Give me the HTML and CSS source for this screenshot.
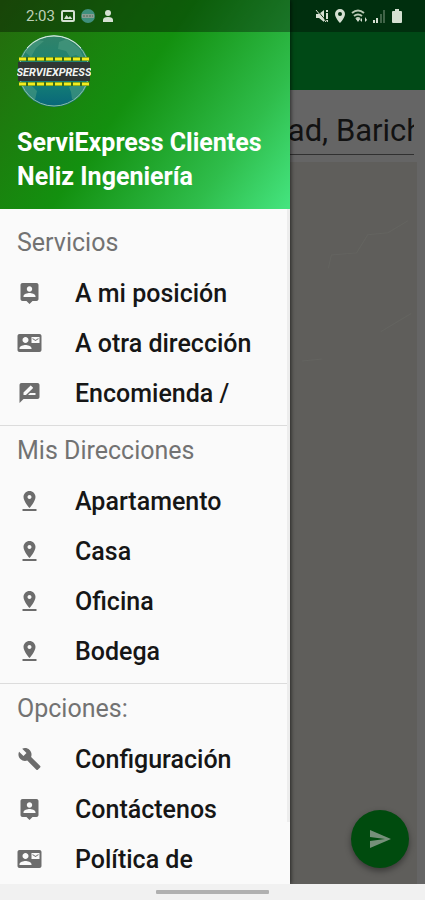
FILE: index.html
```html
<!DOCTYPE html>
<html lang="es">
<head>
<meta charset="UTF-8">
<meta name="viewport" content="width=device-width, initial-scale=1.0">
<title>ServiExpress Clientes</title>
<link rel="stylesheet" href="styles.css">
</head>
<body>
<svg class="sprite" aria-hidden="true">
    <symbol id="pin-person" viewBox="0 0 24 24"><path d="M19 2H5c-1.1 0-2 .9-2 2v14c0 1.1.9 2 2 2h4l3 3 3-3h4c1.1 0 2-.9 2-2V4c0-1.100-.9-2-2-2zm-7 3.300c1.490 0 2.700 1.210 2.700 2.700s-1.210 2.700-2.700 2.700S9.300 9.490 9.300 8s1.210-2.700 2.700-2.700zM18 16H6v-.9c0-2 4-3.100 6-3.100s6 1.100 6 3.100v.9z"/></symbol>
    <symbol id="contact-mail" viewBox="0 0 24 24"><path d="M21 8V7l-3 2-3-2v1l3 2 3-2zm1-5H2C.9 3 0 3.900 0 5v14c0 1.100.9 2 2 2h20c1.100 0 1.990-.9 1.990-2L24 5c0-1.100-.9-2-2-2zM8 6c1.660 0 3 1.340 3 3s-1.340 3-3 3-3-1.340-3-3 1.340-3 3-3zm6 12H2v-1c0-2 4-3.100 6-3.100s6 1.100 6 3.100v1zm8-6h-8V6h8v6z"/></symbol>
    <symbol id="rate" viewBox="0 0 24 24"><path d="M20 2H4c-1.100 0-1.990.9-1.990 2L2 22l4-4h14c1.100 0 2-.9 2-2V4c0-1.100-.9-2-2-2zM6 14v-2.470l6.880-6.880c.2-.2.510-.2.710 0l1.770 1.770c.2.2.2.510 0 .710L8.470 14H6zm12 0h-7.500l2-2H18v2z"/></symbol>
    <symbol id="pin-drop" viewBox="0 0 24 24"><path d="M18 8c0-3.310-2.690-6-6-6S6 4.690 6 8c0 4.500 6 11 6 11s6-6.500 6-11zm-8 0c0-1.100.9-2 2-2s2 .9 2 2-.89 2-2 2c-1.100 0-2-.9-2-2zM5 20v2h14v-2H5z"/></symbol>
    <symbol id="wrench" viewBox="0 0 24 24"><path d="M22.700 19l-9.100-9.100c.9-2.300.4-5-1.500-6.900-2-2-5-2.400-7.400-1.300L9 6 6 9 1.600 4.700C.4 7.100.9 10.100 2.900 12.100c1.900 1.900 4.600 2.400 6.900 1.500l9.100 9.100c.4.4 1 .4 1.400 0l2.300-2.300c.5-.4.5-1.100.1-1.400z"/></symbol>
</svg>

<div class="screen">
    <div class="statusbar">
        <div class="status-group">
            <span class="clock">2:03</span>
            <svg class="status-icon" viewBox="0 0 14 14"><path fill-rule="evenodd" d="M2 1h10q2 0 2 2v8q0 2-2 2H2q-2 0-2-2V3q0-2 2-2zM2 3v8h10V3zM3 10l2.500-4 2 2.500L9 7l2.500 3z"/></svg>
            <svg class="status-icon" viewBox="0 0 14 14"><circle cx="7" cy="7" r="7" fill="#3f8f7c"/><path d="M1 5h12v4H1z" fill="#8a9d92"/><path d="M2 7h10" stroke="#4d6958" stroke-dasharray="2 1"/></svg>
            <svg class="status-icon" viewBox="0 0 14 14"><circle cx="7" cy="4" r="3"/><path d="M2 13v-2q0-3 5-3t5 3v2z"/></svg>
        </div>
        <div class="status-group right">
            <svg class="status-icon" viewBox="0 0 14 14"><path d="M1 5h3L9 1v12L4 9H1zM11 1h2v2h-2zM11 4h2v6h-2zM11 11h2v2h-2z"/><path d="M2 1l10 12" stroke="#0a3008" stroke-width="1"/><path d="M1 1l10 12" stroke="#d5e0d2" stroke-width="1"/></svg>
            <svg class="status-icon" viewBox="0 0 14 14"><path fill-rule="evenodd" d="M7 0a5 5 0 0 1 5 5c0 4-5 9-5 9S2 9 2 5a5 5 0 0 1 5-5zm0 3a2 2 0 1 0 0 4 2 2 0 0 0 0-4z"/></svg>
            <svg class="status-icon wide" viewBox="0 0 17 14"><path d="M1 4q6-5 12 0M3 7q4-3 8 0M5 10q2-2 4 0" fill="none" stroke="#b9cab5" stroke-width="2"/><path d="M7 13L5 10h4zM11 13V9l-2 2zM14 8v5l2-2z"/></svg>
            <svg class="status-icon" viewBox="0 0 14 14"><path d="M1 11h2v3H1zM4 9h2v5H4z"/><path d="M8 5h2v9H8zM11 1h2v13h-2z" opacity=".3"/></svg>
            <svg class="status-icon" viewBox="0 0 14 14"><path d="M5 0h4v2h2q1 0 1 1v10q0 1-1 1H3q-1 0-1-1V3q0-1 1-1h2z"/></svg>
        </div>
    </div>

    <nav class="drawer">
        <header class="drawer-header">
            <svg class="logo" viewBox="0 0 74 74" role="img" aria-label="ServiExpress">
                <defs>
                    <linearGradient id="sea" x1="0" y1="0" x2="0" y2="1">
                        <stop offset="0" stop-color="#318269"/>
                        <stop offset=".6" stop-color="#168374"/>
                        <stop offset="1" stop-color="#08667a"/>
                    </linearGradient>
                    <clipPath id="round"><circle cx="37" cy="37" r="36"/></clipPath>
                </defs>
                <circle cx="37" cy="37" r="36" fill="url(#sea)"/>
                <g clip-path="url(#round)">
                    <path d="M42 8l8-3 12 9 6 12-9-5-6 2-4-6-8-2zM4 49l9 1 7 7-2 9-5 3-9-11zM52 53l8-3h10v9l-9 9-6-3-1-7zM8 18L18 6l9 1-8 7-5 9z" fill="#4b9b80" opacity=".6"/>
                </g>
                <circle cx="37" cy="37" r="35" fill="none" stroke="#8cc0a4" stroke-width="1"/>
                <path d="M10 14A36 36 0 0 1 64 14" fill="none" stroke="#d8eddb" stroke-width="1"/>
                <path d="M2 25h71M2 50h71" stroke="#3b6b17" stroke-width="4"/>
                <path d="M2 25h71M2 50h71" stroke="#f2ed20" stroke-width="3" stroke-dasharray="7 2"/>
                <path d="M1 28h72v19H1z" fill="#303533"/>
                <text class="logo-text" x="37" y="42" text-anchor="middle">SERVIEXPRESS</text>
            </svg>
            <h1>ServiExpress Clientes<br>Neliz Ingeniería</h1>
        </header>

        <section class="menu-section">
            <h2>Servicios</h2>
            <a href="#"><svg><use href="#pin-person"/></svg>A mi posición</a>
            <a href="#"><svg><use href="#contact-mail"/></svg>A otra dirección</a>
            <a href="#"><svg><use href="#rate"/></svg>Encomienda /</a>
        </section>
        <section class="menu-section">
            <h2>Mis Direcciones</h2>
            <a href="#"><svg><use href="#pin-drop"/></svg>Apartamento</a>
            <a href="#"><svg><use href="#pin-drop"/></svg>Casa</a>
            <a href="#"><svg><use href="#pin-drop"/></svg>Oficina</a>
            <a href="#"><svg><use href="#pin-drop"/></svg>Bodega</a>
        </section>
        <section class="menu-section">
            <h2>Opciones:</h2>
            <a href="#"><svg><use href="#wrench"/></svg>Configuración</a>
            <a href="#"><svg><use href="#pin-person"/></svg>Contáctenos</a>
            <a href="#"><svg><use href="#contact-mail"/></svg>Política de</a>
        </section>
    </nav>

    <main class="page">
        <div class="toolbar"></div>
        <input class="address" type="text" aria-label="Dirección" value="ad, Barichara">
        <div class="map">
            <svg class="roads" viewBox="0 0 126 240" aria-hidden="true"><path d="M38 105l3-13 25-2 11-18 20-2 20-12M12 197l20-2M90 168l30-18" fill="none" stroke="#646460" stroke-width="1"/></svg>
            <button class="send" type="button" aria-label="Enviar">
                <svg viewBox="0 0 24 24"><path d="M2 21l21-9L2 3v7l15 2-15 2z"/></svg>
            </button>
        </div>
    </main>

    <footer class="navbar"><span class="handle"></span></footer>
</div>
</body>
</html>
```
FILE: styles.css
```css
* {
    box-sizing: border-box;
}
body {
    margin: 0;
    font-family: Roboto, "Liberation Sans", sans-serif;
    background-color: #f1f1f1;
}
.sprite {
    display: none;
}
.screen {
    position: relative;
    min-height: 100vh;
    display: grid;
    grid-template-columns: minmax(0, 15fr) minmax(0, 7fr);
    grid-template-rows: 1fr 16px;
    overflow: hidden;
}

/* status bar, drawn over the drawer and the page */
.statusbar {
    position: absolute;
    z-index: 3;
    top: 0;
    left: 0;
    right: 0;
    height: 32px;
    padding: 0 21px 0 26px;
    display: flex;
    justify-content: space-between;
    align-items: center;
    background-color: rgba(0, 0, 0, 0.35);
}
.status-group {
    display: flex;
    align-items: center;
    gap: 6px;
}
.status-group.right {
    gap: 4px;
}
.clock {
    font-size: 15px;
    color: #bdd0b7;
}
.status-icon {
    width: 14px;
    height: 14px;
    fill: #d5e0d2;
}
.status-icon.wide {
    width: 17px;
}

/* drawer */
.drawer {
    position: relative;
    z-index: 2;
    background-color: #fafafa;
    box-shadow: 1px 0 4px rgba(0, 0, 0, 0.6);
}
.drawer::after {
    content: "";
    position: absolute;
    top: 209px;
    right: 0;
    bottom: 62px;
    width: 3px;
    background-color: #ededed;
}
.drawer-header {
    height: 209px;
    padding: 34px 17px 0;
    background: linear-gradient(125deg, #266a0d 0%, #13900f 45%, #2fbd4b 78%, #45e580 100%);
}
.logo {
    display: block;
    width: 74px;
    height: 74px;
}
.logo-text {
    font-size: 11px;
    font-weight: bold;
    font-style: italic;
    fill: #f2f4f2;
}
h1 {
    margin: 18px 0 0;
    font-size: 25px;
    line-height: 34px;
    font-weight: bold;
    color: white;
    white-space: nowrap;
}
.menu-section {
    padding-bottom: 7px;
    border-bottom: 1px solid #dcdcdc;
}
.drawer-header + .menu-section {
    padding-top: 9px;
}
.menu-section:last-child {
    padding-bottom: 0;
    border-bottom: none;
}
h2 {
    margin: 0;
    padding-left: 17px;
    font-size: 25px;
    line-height: 50px;
    font-weight: normal;
    color: #727272;
}
.menu-section a {
    display: flex;
    align-items: center;
    height: 50px;
    padding-left: 17px;
    font-size: 25px;
    font-weight: 500;
    color: #161616;
    text-decoration: none;
    white-space: nowrap;
}
.menu-section svg {
    width: 25px;
    height: 24px;
    margin-right: 33px;
    fill: #6c6c6c;
}

/* dimmed page behind the drawer */
.page {
    display: flex;
    flex-direction: column;
    background-color: #656565;
}
.toolbar {
    height: 90px;
    background-color: #004916;
}
.address {
    height: 54px;
    margin: 11px 11px 0 -2px;
    padding: 6px 0 0;
    border: none;
    border-bottom: 1px solid #303030;
    background: none;
    font-family: inherit;
    font-size: 31px;
    color: #121212;
    outline: none;
    min-width: 0;
}
.map {
    flex: 1;
    display: flex;
    flex-direction: column;
    justify-content: space-between;
    margin: 7px 8px 0 0;
    background-color: #5f5e5b;
}
.roads {
    width: 100%;
}
.send {
    align-self: flex-end;
    width: 58px;
    height: 58px;
    margin: 0 8px 16px 0;
    padding: 0;
    display: flex;
    align-items: center;
    justify-content: center;
    border: none;
    border-radius: 50%;
    background-color: #004b0e;
    box-shadow: 0 3px 6px rgba(0, 0, 0, 0.4);
}
.send svg {
    width: 24px;
    height: 24px;
    fill: #76907a;
}

.navbar {
    z-index: 3;
    grid-column: 1 / -1;
    display: flex;
    justify-content: center;
    align-items: center;
    background-color: #f1f1f1;
}
.handle {
    width: 113px;
    height: 4px;
    border-radius: 1px;
    background-color: #b0b0b0;
}
```
